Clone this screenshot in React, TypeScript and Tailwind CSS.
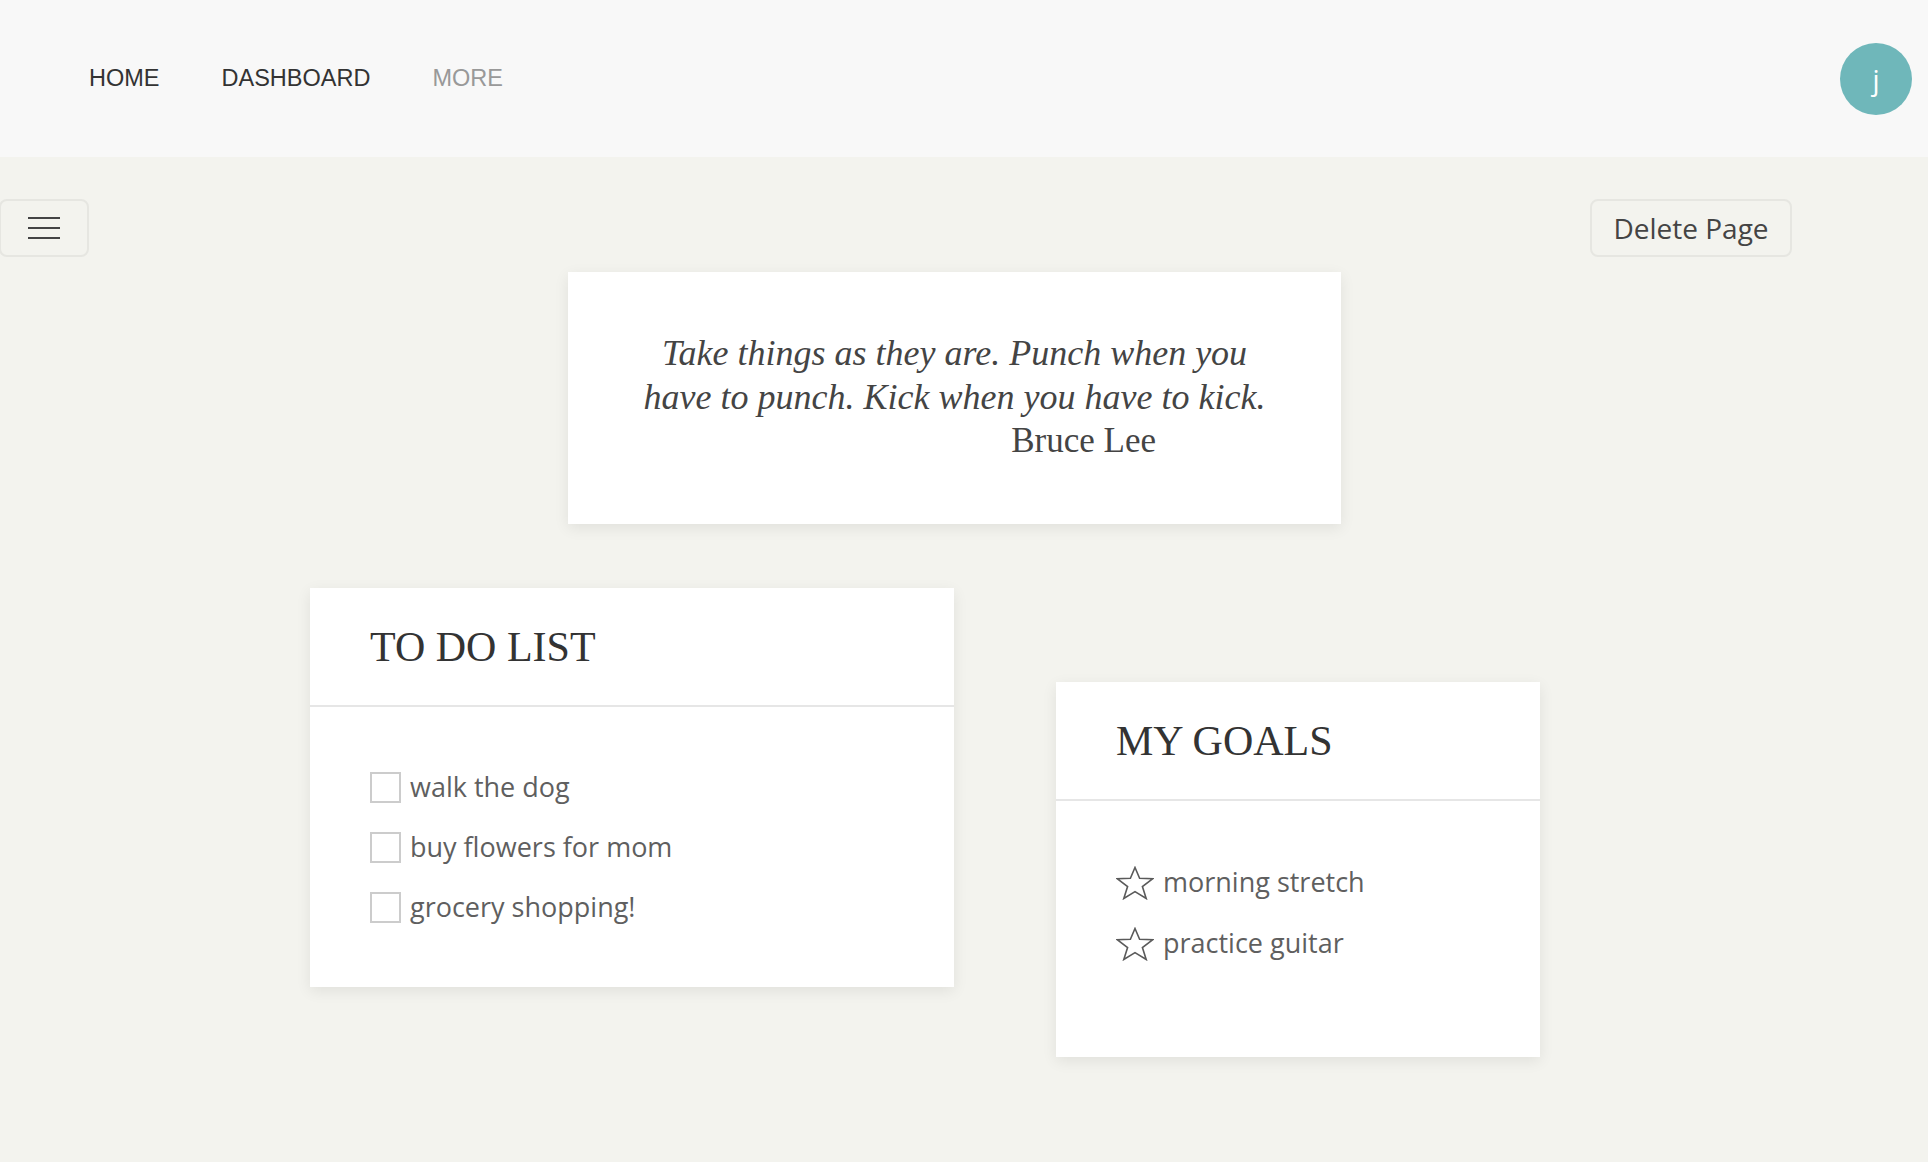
import React from 'react';

const todos = ['walk the dog', 'buy flowers for mom', 'grocery shopping!'];
const goals = ['morning stretch', 'practice guitar'];

function StarIcon() {
  return (
    <svg width="38" height="34" viewBox="0 0 38 34" className="shrink-0">
      <polygon
        points="19,1.5 23.6,12.3 36.5,12.8 26.4,20.6 30.2,32.5 19,25.6 7.8,32.5 11.6,20.6 1.5,12.8 14.4,12.3"
        fill="none"
        stroke="#5a5a5a"
        strokeWidth="1.6"
        strokeLinejoin="miter"
      />
    </svg>
  );
}

function Card({ title, className, children }: { title: string; className: string; children: React.ReactNode }) {
  return (
    <div className={`bg-white shadow-[0_4px_14px_rgba(0,0,0,0.08)] ${className}`}>
      <div className="h-[119px] border-b-2 border-[#e6e6e6] px-[60px] flex items-center">
        <h2 className="text-[42px] text-[#333] font-['Liberation_Serif',serif] leading-none">{title}</h2>
      </div>
      {children}
    </div>
  );
}

export default function App() {
  return (
    <div className="w-full min-h-screen bg-[#f3f3ee] font-['Open_Sans',sans-serif]">
      {/* top navigation */}
      <header className="h-[157px] bg-[#f8f8f8] flex items-center justify-between">
        <nav className="pl-[89px] flex items-center gap-[62px] font-['Liberation_Sans',sans-serif] text-[23.5px] uppercase">
          <a className="text-[#333]">Home</a>
          <a className="text-[#333]">Dashboard</a>
          <a className="text-[#999]">More</a>
        </nav>
        <div className="mr-[16px] w-[72px] h-[72px] rounded-full bg-[#6fb7ba] flex items-center justify-center text-white text-[28px]">
          j
        </div>
      </header>

      <main className="pb-[80px]">
        {/* toolbar */}
        <div className="pt-[42px] flex items-center justify-between">
          <button className="w-[90px] h-[58px] -ml-[1px] border-2 border-[#e6e6e1] rounded-lg flex flex-col items-center justify-center gap-[8px]">
            <span className="block w-[32px] h-[2px] bg-[#444]" />
            <span className="block w-[32px] h-[2px] bg-[#444]" />
            <span className="block w-[32px] h-[2px] bg-[#444]" />
          </button>
          <button className="mr-[136px] w-[202px] h-[58px] border-2 border-[#e6e6e1] rounded-lg text-[28px] text-[#444] flex items-center justify-center">
            Delete Page
          </button>
        </div>

        {/* quote widget */}
        <div className="mt-[15px] ml-[568px] w-[773px] h-[252px] bg-white shadow-[0_4px_14px_rgba(0,0,0,0.08)] pt-[59px] font-['Liberation_Serif',serif] text-[36px] leading-[44px] text-[#444]">
          <p className="italic text-center">
            Take things as they are. Punch when you
            <br />
            have to punch. Kick when you have to kick.
          </p>
          <p className="text-right pr-[185px] text-[35px]">Bruce Lee</p>
        </div>

        {/* list widgets */}
        <div className="mt-[64px] pl-[310px] flex items-start gap-[102px]">
          <Card title="TO DO LIST" className="w-[644px] h-[399px]">
            <ul className="pt-[50px] px-[60px]">
              {todos.map((t) => (
                <li key={t} className="h-[60px] flex items-center gap-[9px]">
                  <span className="block w-[31px] h-[31px] border-2 border-[#cccccc] shrink-0" />
                  <span className="text-[27px] text-[#5f5f5f]">{t}</span>
                </li>
              ))}
            </ul>
          </Card>

          <Card title="MY GOALS" className="mt-[94px] w-[484px] h-[375px]">
            <ul className="pt-[51px] px-[60px]">
              {goals.map((g) => (
                <li key={g} className="h-[61px] flex items-center gap-[9px]">
                  <StarIcon />
                  <span className="text-[27px] text-[#5f5f5f]">{g}</span>
                </li>
              ))}
            </ul>
          </Card>
        </div>
      </main>
    </div>
  );
}
